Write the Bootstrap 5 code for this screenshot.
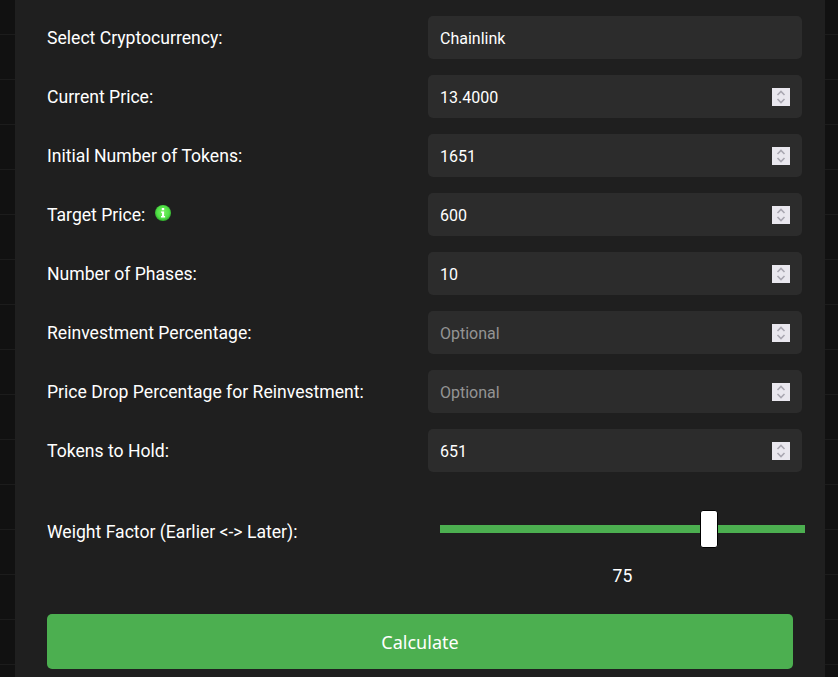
<!DOCTYPE html>
<html lang="en"><head><meta charset="utf-8"><title>Calculator</title>
<link href="https://cdn.jsdelivr.net/npm/bootstrap@5.3.0/dist/css/bootstrap.min.css" rel="stylesheet">
<style>
html,body{height:677px;overflow:hidden}
body{background-color:#111;background-image:repeating-linear-gradient(to bottom,transparent 0 44px,#1c1c1c 44px 45px);background-position:0 -10px;font-family:Roboto,sans-serif;color:#fff}
.calc-panel{width:810px;height:677px;margin-left:15px;background:#1f1f1f;padding:16px 0 0 32px;overflow:hidden}
.calc-row{width:755px;height:43px;margin-bottom:16px}
.calc-label{width:381px;font-size:17.6px;flex:none;color:#fff;margin:0;padding-top:2px}
.calc-field{width:374px;height:43px;flex:none;background:#2c2c2c;color:#fff;border:0;border-radius:5px;padding:2px 12px 0;font-family:Roboto,sans-serif;font-size:16px;outline:0}
.calc-field::placeholder{color:#949494}
.calc-field::-webkit-inner-spin-button{-webkit-appearance:none;appearance:none;opacity:1;width:18px;height:18px;align-self:center;margin-top:-2px;background:#e9e7ee url("data:image/svg+xml,%3Csvg xmlns='http://www.w3.org/2000/svg' viewBox='0 0 18 18'%3E%3Cpath d='M5.5 7 9 3.5 12.5 7M5.5 11 9 14.5 12.5 11' fill='none' stroke='%23a9a7b1' stroke-width='1.6'/%3E%3C/svg%3E") center/18px 18px no-repeat}
.calc-info{width:16px;height:16px;margin-left:10px;margin-top:-4px}
.calc-weight{width:755px;margin-top:39px;height:43px}
.calc-weight .calc-label{padding-top:0}
.calc-range{appearance:none;-webkit-appearance:none;width:365px;height:8px;background:#4caf50;margin:0 0 8px 12px;flex:none;outline:0;display:block}
.calc-range::-webkit-slider-thumb{-webkit-appearance:none;width:18px;height:38px;background:#fff;border:1px solid #000;border-radius:3px;cursor:pointer}
.calc-val{width:365px;margin:10px 0 0 393px;text-align:center;font-size:17.6px;line-height:24px}
.calc-btn{width:746px;height:55px;margin-top:26px;padding-top:8px;background:#4caf50;border:0;border-radius:5px;color:#fff;font-family:"Noto Sans",sans-serif;font-size:18px;display:block}
.calc-btn:hover{background:#4caf50;color:#fff}
</style></head>
<body>
<div class="calc-panel">
<form>
<div class="calc-row d-flex align-items-center"><label class="calc-label">Select Cryptocurrency:</label><input class="calc-field" type="text" value="Chainlink"></div>
<div class="calc-row d-flex align-items-center"><label class="calc-label">Current Price:</label><input class="calc-field" type="number" value="13.4000"></div>
<div class="calc-row d-flex align-items-center"><label class="calc-label">Initial Number of Tokens:</label><input class="calc-field" type="number" value="1651"></div>
<div class="calc-row d-flex align-items-center"><label class="calc-label d-flex align-items-center">Target Price:<svg class="calc-info" viewBox="0 0 16 16" aria-hidden="true"><defs><radialGradient id="g" cx=".5" cy=".45" r=".55"><stop offset="0" stop-color="#7cf265"/><stop offset=".7" stop-color="#4fe045"/><stop offset="1" stop-color="#2fa82c"/></radialGradient></defs><circle cx="8" cy="8" r="8" fill="url(#g)"/><rect x="6.8" y="3" width="2.4" height="2.2" fill="#fff"/><path d="M6 6.4h3.1v4.6h1v1.4H6V11h1V7.8H6z" fill="#fff"/></svg></label><input class="calc-field" type="number" value="600"></div>
<div class="calc-row d-flex align-items-center"><label class="calc-label">Number of Phases:</label><input class="calc-field" type="number" value="10"></div>
<div class="calc-row d-flex align-items-center"><label class="calc-label">Reinvestment Percentage:</label><input class="calc-field" type="number" placeholder="Optional"></div>
<div class="calc-row d-flex align-items-center"><label class="calc-label">Price Drop Percentage for Reinvestment:</label><input class="calc-field" type="number" placeholder="Optional"></div>
<div class="calc-row d-flex align-items-center"><label class="calc-label">Tokens to Hold:</label><input class="calc-field" type="number" value="651"></div>
<div class="calc-weight d-flex align-items-center"><label class="calc-label">Weight Factor (Earlier &lt;-&gt; Later):</label><input class="calc-range" type="range" min="0" max="100" value="75"></div>
<div class="calc-val">75</div>
<button class="calc-btn btn" type="button">Calculate</button>
</form>
</div>
<script src="https://cdn.jsdelivr.net/npm/bootstrap@5.3.0/dist/js/bootstrap.bundle.min.js"></script>
</body></html>
